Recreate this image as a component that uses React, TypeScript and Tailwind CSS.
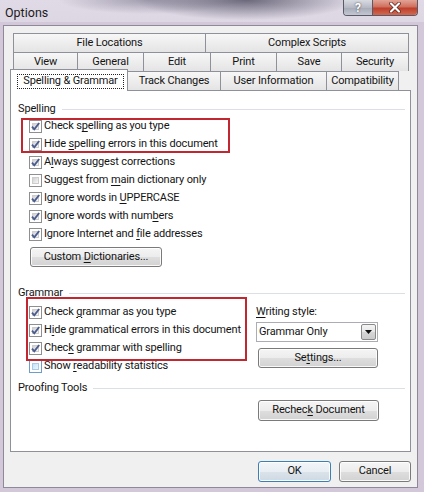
import React from "react";

const U = ({ children }: { children: React.ReactNode }) => (
  <span className="underline underline-offset-[2px] decoration-[1px]">{children}</span>
);

function Check({ checked = true, hot = false }: { checked?: boolean; hot?: boolean }) {
  return (
    <span
      className={`relative flex h-[13px] w-[13px] shrink-0 border bg-white p-[2px] ${
        hot ? "border-[#6f9cc8]" : "border-[#8f8f8f]"
      }`}
    >
      <span
        className={`flex-1 border ${
          hot
            ? "border-[#a9cbe6] bg-[linear-gradient(135deg,#c4e2f7,#eef8fe)]"
            : "border-[#cdcdcd] bg-[linear-gradient(135deg,#d0d0d0,#f8f8f8)]"
        }`}
      />
      {checked && (
        <svg className="absolute left-[-1px] top-[-1px]" width="13" height="13" viewBox="0 0 13 13">
          <path d="M3 6.6 L5.3 9.3 L10.2 3" fill="none" stroke="#4b5b8e" strokeWidth="1.9" />
        </svg>
      )}
    </span>
  );
}

function Row({ checked = true, hot = false, children }: { checked?: boolean; hot?: boolean; children: React.ReactNode }) {
  return (
    <div className="flex h-[18px] items-center gap-[2px] pl-[18px]">
      <Check checked={checked} hot={hot} />
      <span className="whitespace-nowrap">{children}</span>
    </div>
  );
}

function Btn({ className = "", def = false, children }: { className?: string; def?: boolean; children: React.ReactNode }) {
  return (
    <div
      className={`flex items-center justify-center rounded-[3px] border whitespace-nowrap shadow-[inset_0_0_0_1px_rgba(255,255,255,0.85)] ${
        def
          ? "border-[#3c7fb1] bg-[linear-gradient(#f2f6f9_0%,#e8eef3_50%,#dbe3ea_51%,#cfd9e2_100%)]"
          : "border-[#7a7a7a] bg-[linear-gradient(#f5f5f5_0%,#ececec_50%,#dedede_51%,#d2d2d2_100%)]"
      } ${className}`}
    >
      <span>{children}</span>
    </div>
  );
}

function Header({ children }: { children: React.ReactNode }) {
  return (
    <div className="flex h-[14px] items-center pl-[7px] pr-[5px]">
      <span className="whitespace-nowrap">{children}</span>
      <div className="ml-[6px] h-px flex-1 bg-[#dcdfe3]" />
    </div>
  );
}

function Tab({ w, first = false, children }: { w: string; first?: boolean; children: React.ReactNode }) {
  return (
    <div
      className={`flex h-[19px] items-center justify-center border border-b-0 border-[#8e9199] bg-[linear-gradient(#f7f7f7,#e4e4e4)] whitespace-nowrap ${w} ${
        first ? "" : "-ml-px"
      }`}
    >
      <span>{children}</span>
    </div>
  );
}

function TitleBar() {
  return (
    <div className="flex h-[22px] items-start bg-[radial-gradient(ellipse_110px_20px_at_58%_0%,rgba(86,84,104,0.85),rgba(86,84,104,0)),radial-gradient(ellipse_90px_14px_at_35%_0%,rgba(120,116,138,0.6),rgba(120,116,138,0)),linear-gradient(#e0dae6,#ddd6e3)]">
      <span className="pl-[5px] pt-[4px] text-[12.5px] tracking-normal text-[#1c1c1c]">Options</span>
      <div className="ml-auto mr-[6px] flex h-[16px] overflow-hidden rounded-b-[4px] border border-t-0 border-[#5b5868]">
        <div className="flex w-[29px] items-center justify-center border-r border-[#5b5868] bg-[linear-gradient(#d9dbe2,#b7bac5_50%,#a6aab7_51%,#c3c7d1)]">
          <span className="text-[12px] font-bold leading-none text-white [text-shadow:0_0_2px_#333]">?</span>
        </div>
        <div className="flex w-[44px] items-center justify-center bg-[linear-gradient(#e2a496,#d0705e_45%,#bf3f2c_55%,#d06a52)]">
          <svg width="14" height="11" viewBox="0 0 14 11">
            <path d="M3 1.5 L11 9.5 M11 1.5 L3 9.5" stroke="#5a1e14" strokeWidth="3.6" strokeLinecap="round" />
            <path d="M3 1.5 L11 9.5 M11 1.5 L3 9.5" stroke="#ffffff" strokeWidth="2.2" strokeLinecap="round" />
          </svg>
        </div>
      </div>
    </div>
  );
}

export default function App() {
  return (
    <div className="flex h-[492px] w-[424px] flex-col overflow-hidden bg-[#d3c7da] font-[family-name:Roboto,Liberation_Sans,sans-serif] text-[11px] tracking-[-0.15px] text-[#141414]">
      <TitleBar />
      <div className="ml-[3px] mr-[6px] mt-[3px] flex h-[463px] flex-col border border-[#8e8898] bg-[#f0f0f0] pt-[7px]">
        {/* tab rows */}
        <div className="ml-[9px] flex">
          <Tab w="w-[193px]" first>File Locations</Tab>
          <Tab w="w-[204px]">Complex Scripts</Tab>
        </div>
        <div className="ml-[9px] flex">
          <Tab w="w-[65px]" first>View</Tab>
          <Tab w="w-[67px]">General</Tab>
          <Tab w="w-[68px]">Edit</Tab>
          <Tab w="w-[67px]">Print</Tab>
          <Tab w="w-[66px]">Save</Tab>
          <Tab w="w-[68px]">Security</Tab>
        </div>
        <div className="ml-[6px] flex h-[19px] items-end">
          <div className="relative z-10 mb-[-1px] flex h-[22px] w-[118px] items-start border border-b-0 border-[#8e9199] bg-white pl-[6px] pt-[4px]">
            <span className="flex h-[15px] w-[107px] items-center justify-center border border-dotted border-[#222]">
              <span>Spelling &amp; Grammar</span>
            </span>
          </div>
          <Tab w="w-[94px]">Track Changes</Tab>
          <Tab w="w-[107px]">User Information</Tab>
          <Tab w="w-[73px]">Compatibility</Tab>
        </div>

        {/* panel */}
        <div className="ml-[6px] flex h-[362px] w-[401px] flex-col border border-[#8e9199] bg-white pt-[11px]">
          <Header>Spelling</Header>
          <div className="relative mt-[1px]">
            <Row>
              Check s<U>p</U>elling as you type
            </Row>
            <Row>
              Hide <U>s</U>pelling errors in this document
            </Row>
            <Row>
              A<U>l</U>ways suggest corrections
            </Row>
            <Row checked={false}>
              Suggest from <U>m</U>ain dictionary only
            </Row>
            <Row>
              Ignore words in <U>U</U>PPERCASE
            </Row>
            <Row>
              Ignore words with num<U>b</U>ers
            </Row>
            <Row>
              Ignore Internet and <U>f</U>ile addresses
            </Row>
            <div className="pointer-events-none absolute left-[10px] top-[1px] h-[35px] w-[209px] border-2 border-[#c2262f]" />
          </div>
          <Btn className="ml-[19px] mt-[4px] h-[20px] w-[132px]">
            Custom <U>D</U>ictionaries...
          </Btn>

          <div className="mt-[19px]">
            <Header>Grammar</Header>
          </div>
          <div className="mt-[3px] flex">
            <div className="relative w-[245px]">
              <Row>
                Check <U>g</U>rammar as you type
              </Row>
              <Row>
                H<U>i</U>de grammatical errors in this document
              </Row>
              <Row>
                Chec<U>k</U> grammar with spelling
              </Row>
              <Row hot checked={false}>
                Show <U>r</U>eadability statistics
              </Row>
              <div className="pointer-events-none absolute left-[15px] top-[-6px] h-[64px] w-[221px] border-2 border-[#c2262f]" />
            </div>
            <div className="flex w-[122px] flex-col">
              <div className="mt-[2px] flex h-[14px] items-center">
                <span>
                  <U>W</U>riting style:
                </span>
              </div>
              <div className="mt-[3px] flex h-[20px] w-[122px] items-center border border-[#abadb3] bg-white pl-[2px]">
                <span className="flex-1">Grammar Only</span>
                <div className="mr-px flex h-[16px] w-[15px] items-center justify-center rounded-[2px] border border-[#8a8a8a] bg-[linear-gradient(#f4f4f4,#e6e6e6_50%,#d6d6d6_51%,#cbcbcb)]">
                  <svg width="7" height="4" viewBox="0 0 7 4">
                    <path d="M0 0 H7 L3.5 4 Z" fill="#111" />
                  </svg>
                </div>
              </div>
              <Btn className="ml-[2px] mt-[6px] h-[20px] w-[120px]">
                Se<U>t</U>tings...
              </Btn>
            </div>
          </div>

          <div className="mt-[6px]">
            <Header>Proofing Tools</Header>
          </div>
          <Btn className="ml-[247px] mt-[5px] h-[21px] w-[121px]">
            Rechec<U>k</U> Document
          </Btn>
        </div>

        {/* bottom buttons */}
        <div className="mt-[9px] flex justify-end gap-[8px] pr-[6px]">
          <Btn def className="h-[21px] w-[73px]">
            OK
          </Btn>
          <Btn className="h-[21px] w-[72px]">Cancel</Btn>
        </div>
      </div>
    </div>
  );
}
